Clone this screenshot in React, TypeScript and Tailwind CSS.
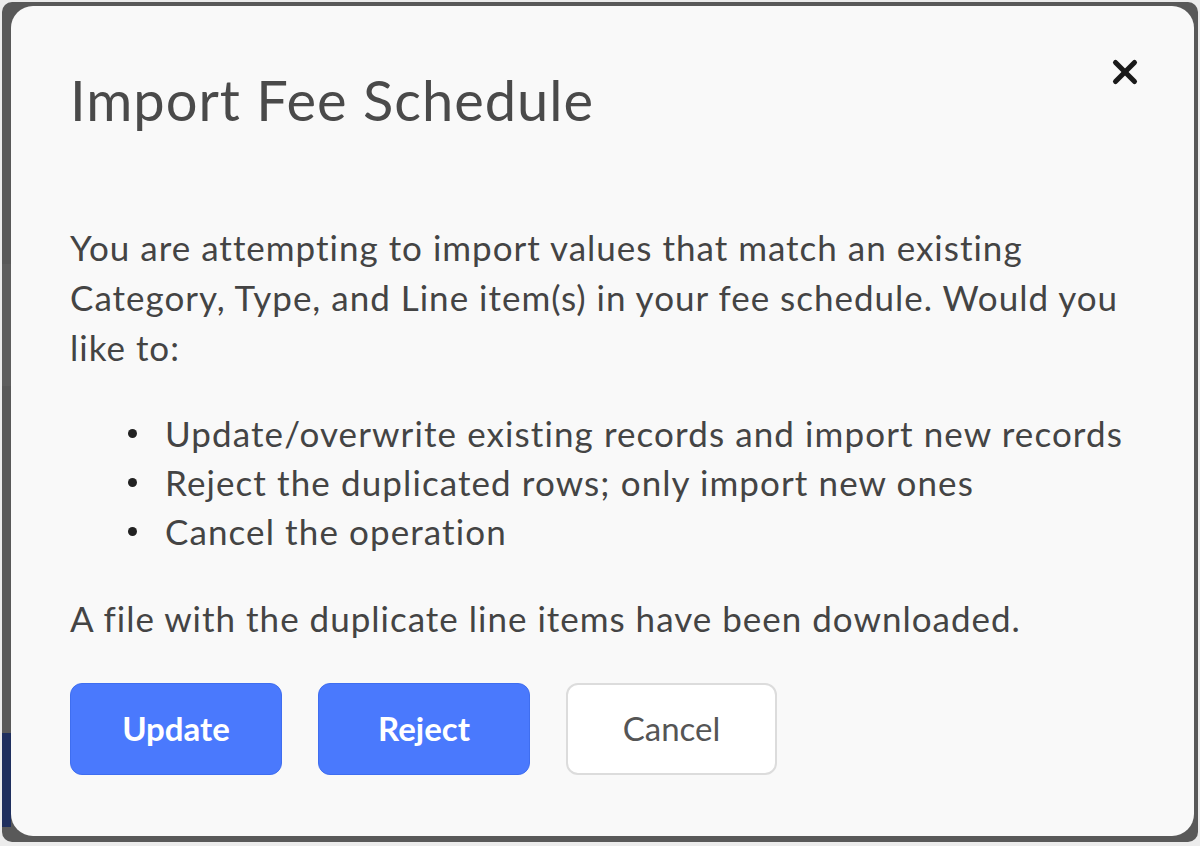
import { X } from 'lucide-react';

const options = [
  'Update/overwrite existing records and import new records',
  'Reject the duplicated rows; only import new ones',
  'Cancel the operation',
];

export default function App() {
  return (
    <div className="w-[1200px] h-[846px] bg-[#ececec] p-[2px] font-['Lato',sans-serif]">
      <div className="relative w-full h-[840px] rounded-[10px] bg-[#595959] overflow-hidden pl-[9px] pr-[4px] pt-[4px] pb-[6px]">
        {/* page peeking behind the overlay */}
        <div className="absolute left-0 top-[731px] w-[9px] h-[94px] bg-[#1f2f5e]" />
        <div className="absolute left-0 top-[262px] w-[9px] h-[122px] bg-[#5e5e5e]" />

        <div className="relative h-full rounded-[22px] bg-[#f9f9f9] pl-[59px] pr-[56px] pt-[64px]">
          <button className="absolute right-[50px] top-[47px] text-[#1a1a1a]">
            <X className="w-[38px] h-[38px]" strokeWidth={3.2} />
          </button>

          <h2 className="text-[56px] leading-[60px] font-normal text-[#4a4a4a] tracking-[1px]">
            Import Fee Schedule
          </h2>

          <p className="mt-[92px] text-[35px] leading-[50px] tracking-[1px] text-[#444444]">
            You are attempting to import values that match an existing Category, Type, and Line item(s)
            in your fee schedule. Would you like to:
          </p>

          <ul className="mt-[37px] text-[35px] leading-[49px] tracking-[1.1px] text-[#444444]">
            {options.map((opt) => (
              <li key={opt} className="flex items-center">
                <div className="ml-[58px] mr-[28px] w-[9px] h-[9px] min-w-[9px] rounded-full bg-[#222222]" />
                <span>{opt}</span>
              </li>
            ))}
          </ul>

          <p className="mt-[37px] text-[35px] leading-[50px] tracking-[1px] text-[#444444]">
            A file with the duplicate line items have been downloaded.
          </p>

          <div className="mt-[40px] flex gap-[36px]">
            <button className="w-[212px] h-[92px] rounded-[12px] bg-[#4a79fd] border border-[#3f6ef0] text-white text-[33px] font-bold">
              Update
            </button>
            <button className="w-[212px] h-[92px] rounded-[12px] bg-[#4a79fd] border border-[#3f6ef0] text-white text-[33px] font-bold">
              Reject
            </button>
            <button className="w-[211px] h-[92px] rounded-[12px] bg-white border-2 border-[#dcdcdc] text-[#555555] text-[33px]">
              Cancel
            </button>
          </div>
        </div>
      </div>
    </div>
  );
}
